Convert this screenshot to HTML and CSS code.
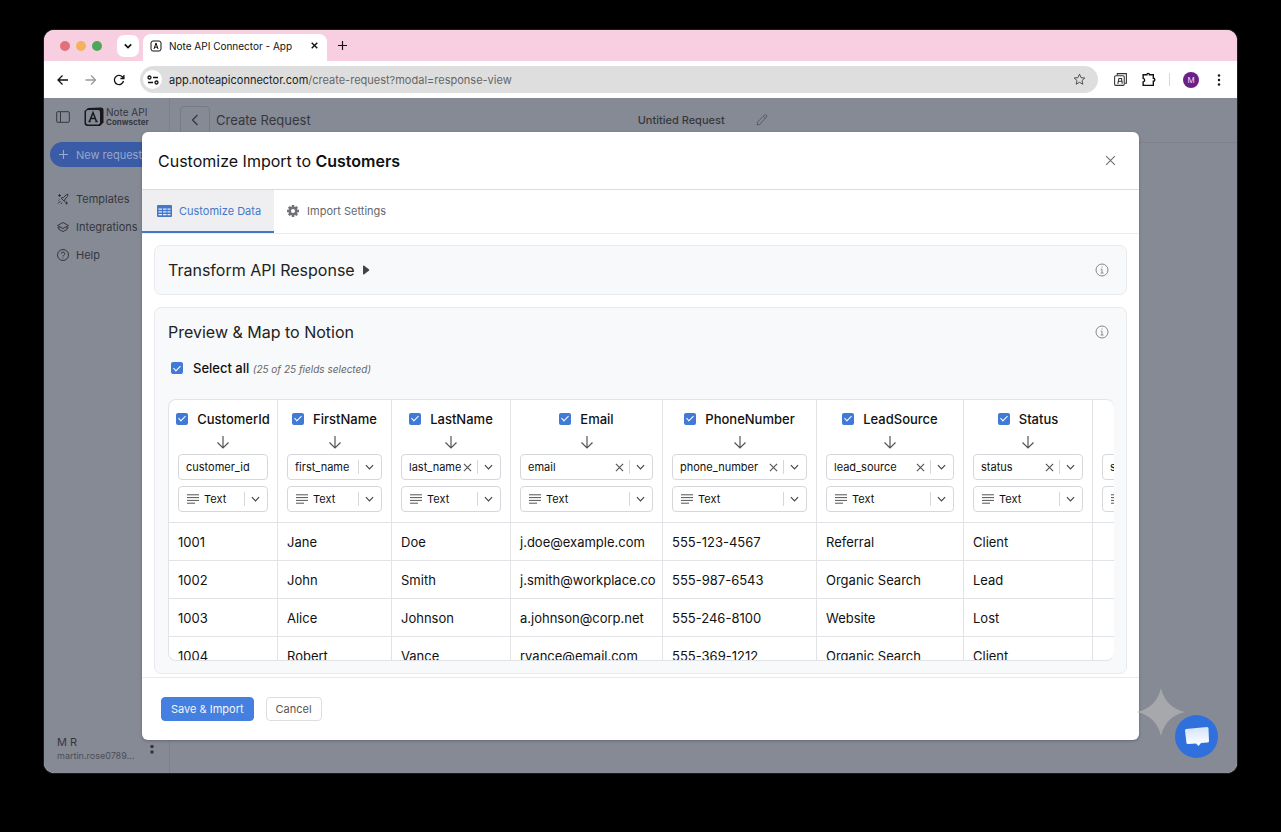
FILE: index.html
```html
<!DOCTYPE html>
<html lang="en">
  <head>
    <meta charset="UTF-8" />
    <meta name="viewport" content="width=device-width, initial-scale=1.0" />
    <title>Note API Connector - App</title>
    <link rel="stylesheet" href="styles.css">
  </head>
  <body>
    <!-- Shared icons -->
    <svg class="sprite" aria-hidden="true">
      <symbol id="chevron" viewBox="0 0 10 10"><path d="M1 3l4 4 4-4" /></symbol>
      <symbol id="cross" viewBox="0 0 10 10"><path d="M1 1l8 8M9 1l-8 8" /></symbol>
      <symbol id="down" viewBox="0 0 14 14"><path d="M7 1v12M1.5 7.5L7 13l5.5-5.5" /></symbol>
      <symbol id="lines" viewBox="0 0 12 10"><path d="M0 .8h12M0 3.6h12M0 6.4h12M0 9.2h8" /></symbol>
      <symbol id="info" viewBox="0 0 14 14"><circle cx="7" cy="7" r="6" /><path d="M5.8 6.2H7v3.6M5.6 10h2.9M7 3.6v1" /></symbol>
    </svg>

    <div class="window">
      <!-- Browser tabs -->
      <div class="tab-strip">
        <div class="lights"><i class="red"></i><i class="amber"></i><i class="green"></i></div>
        <button class="tab-search" aria-label="Search tabs"><svg class="icon s8"><use href="#chevron" /></svg></button>
        <div class="browser-tab">
          <svg class="favicon" viewBox="0 0 12 12"><rect x="1" y="1" width="10" height="10" rx="2" /><path d="M4 9l2-6 2 6M4.6 7.2h2.8" /></svg>
          <span>Note API Connector - App</span>
          <button aria-label="Close tab"><svg class="icon s7"><use href="#cross" /></svg></button>
        </div>
        <button class="new-tab" aria-label="New tab"><svg class="icon s9" viewBox="0 0 10 10"><path d="M5 0v10M0 5h10" /></svg></button>
      </div>

      <!-- Browser toolbar -->
      <div class="toolbar">
        <button aria-label="Back"><svg class="icon s12" viewBox="0 0 12 12"><path d="M11 6H1M5.500 1.500L1 6l4.500 4.500" /></svg></button>
        <button class="faded" aria-label="Forward"><svg class="icon s12" viewBox="0 0 12 12"><path d="M.5 6h10M6 1.5L10.500 6 6 10.500" /></svg></button>
        <button aria-label="Reload"><svg class="icon s12" viewBox="0 0 12 12"><path d="M10.500 7a4.600 4.600 0 1 1-1.200-4.200L10.800 4.300M10.900 1v3.500H7.400" /></svg></button>
        <div class="address">
          <span class="site-info"><svg class="icon s12" viewBox="0 0 12 12"><circle cx="2.500" cy="3.500" r="1.500" /><path d="M6 3.500h5M1 8.500h5" /><circle cx="9.500" cy="8.500" r="1.500" /></svg></span>
          <span class="url"><b>app.noteapiconnector.com</b>/create-request?modal=response-view</span>
          <button aria-label="Bookmark"><svg class="star" viewBox="0 0 14 14"><path d="M7 1.300l1.700 3.700 4 .4-3 2.700.9 4L7 10l-3.600 2.100.9-4-3-2.700 4-.4z" /></svg></button>
        </div>
        <div class="extensions">
          <button aria-label="Note API extension"><svg class="ext" viewBox="0 0 14 14"><path d="M4 3V1.500h8.500v9H11" /><rect x="1.500" y="3.500" width="9" height="9" rx="1" /><path d="M4.500 11l1-5h2.500l.3 2.500-3 .3M8.500 8.500V11" /></svg></button>
          <button aria-label="Extensions"><svg class="puzzle" viewBox="0 0 14 14"><path d="M2 2.500h3.500a1.200 1.200 0 0 1 2.400 0H11.500v3.300a1.200 1.200 0 0 1 0 2.800V12.500H2V9.200q1.400-.3 1.400-1.600T2 6z" /></svg></button>
          <i class="rule"></i>
          <span class="avatar">M</span>
          <button class="menu" aria-label="Menu"><svg class="dots" viewBox="0 0 4 12"><circle cx="2" cy="1.500" r="1.200" /><circle cx="2" cy="6" r="1.200" /><circle cx="2" cy="10.500" r="1.200" /></svg></button>
        </div>
      </div>

      <div class="app">
        <!-- Sidebar -->
        <aside class="sidebar">
          <div class="brand">
            <svg class="panel-icon" viewBox="0 0 14 12"><rect x=".7" y=".7" width="12.600" height="10.600" rx="1" /><path d="M4.500 1v10" /></svg>
            <svg class="logo" viewBox="0 0 20 20"><path class="edge" d="M4 1l13-.5Q19.500.5 19.500 3v12.500L16 19H3.500Q.5 19 .5 16V4z" /><rect class="face" x="2" y="3" width="14" height="14.500" rx="2" /><path class="letter" d="M5.500 14.500L9 5.500l3.500 9M6.800 11.500h4.400M4.500 14.500h2.200M11.300 14.500h2.400" /></svg>
            <div class="brand-name"><span>Note API</span><b>Conwscter</b></div>
          </div>
          <button class="new-request"><svg class="icon s9" viewBox="0 0 10 10"><path d="M5 0v10M0 5h10" /></svg>New request</button>
          <nav>
            <a href="#templates"><svg class="icon s12" viewBox="0 0 12 12"><path d="M4 5l2.500-.5L9 2l2-.8L10.500 3.500 8 6 7.500 8.500M4 5l3.500 3.500M3.500 8L1 10.500M5 9.500l-1 1.500M1.500 7.500l1-1" /><path d="M2.500 1v3M1 2.500h3M9.500 8.500v3M8 10h3" /></svg>Templates</a>
            <a href="#integrations"><svg class="icon s12" viewBox="0 0 12 12"><path d="M6 1.500L.5 4.500 6 7.500l5.500-3zM2 5.500v3l4 2 4-2v-3M.5 6.500L2 7.300M11.500 6.500L10 7.300" /></svg>Integrations</a>
            <a href="#help"><svg class="icon s12" viewBox="0 0 12 12"><circle cx="6" cy="6" r="5.500" /><path d="M4.300 4.700a1.700 1.700 0 1 1 2.400 1.600Q6 6.600 6 7.400M6 8.600v.8" /></svg>Help</a>
          </nav>
          <div class="user">
            <div><span>M R</span><small>martin.rose0789...</small></div>
            <svg class="dots" viewBox="0 0 4 12"><circle cx="2" cy="3.500" r="1.800" /><circle cx="2" cy="9" r="1.800" /></svg>
          </div>
        </aside>

        <!-- Page behind the modal -->
        <main class="page">
          <div class="page-bar">
            <button class="back" aria-label="Go back"><svg class="icon s12" viewBox="0 0 12 12"><path d="M8.500 1L3.500 6l5 5" /></svg></button>
            <h1>Create Request</h1>
            <div class="request-name"><span>Untitied Request</span><svg class="icon s12" viewBox="0 0 12 12"><path d="M1 11l.6-3L8.500 1.100q1-.8 1.900 0t0 1.900L3.900 10.300zM7.400 2.300l2 2" /></svg></div>
          </div>
        </main>

        <!-- Customize import modal -->
        <div class="overlay">
          <section class="modal" role="dialog" aria-labelledby="modal-title">
            <header class="modal-header">
              <h2 id="modal-title">Customize Import to <b>Customers</b></h2>
              <button aria-label="Close"><svg class="icon s11"><use href="#cross" /></svg></button>
            </header>
            <div class="tabs">
              <button class="tab active"><svg class="grid-icon" viewBox="0 0 15 12"><rect class="fill" x="0" y="0" width="15" height="12" rx="1" /><path d="M1.500 4.200h3.500M6 4.200h3.500M10.500 4.200h3M1.500 6.900h3.500M6 6.900h3.500M10.500 6.900h3M1.500 9.600h3.500M6 9.600h3.500M10.500 9.600h3" /></svg>Customize Data</button>
              <button class="tab"><svg class="gear" viewBox="0 0 12 12"><circle cx="6" cy="6" r="3.300" /><path d="M6 0v2.500M6 9.500V12M0 6h2.500M9.500 6H12M1.800 1.800l1.700 1.700M8.500 8.500l1.700 1.700M10.200 1.800L8.500 3.500M3.500 8.500l-1.700 1.700" /></svg>Import Settings</button>
            </div>
            <div class="modal-body">
              <div class="card transform">
                <div class="card-head">
                  <h3>Transform API Response <svg class="play" viewBox="0 0 8 10"><path d="M1 1.500Q1 0 2.300.8l4.500 3.400q1 .8 0 1.600L2.300 9.200Q1 10 1 8.500z" /></svg></h3>
                  <svg class="info"><use href="#info" /></svg>
                </div>
              </div>
              <div class="card preview">
                <div class="card-head">
                  <h3>Preview &amp; Map to Notion</h3>
                  <svg class="info"><use href="#info" /></svg>
                </div>
                <label class="select-all"><input type="checkbox" checked /><span>Select all <em>(25 of 25 fields selected)</em></span></label>
                <div class="table-wrap">
                  <table>
                    <colgroup><col class="w-id" /><col class="w-first" /><col class="w-last" /><col class="w-email" /><col class="w-phone" /><col class="w-lead" /><col class="w-status" /><col class="w-more" /></colgroup>
                    <thead>
                      <tr>
                        <th>
                          <label class="check"><input type="checkbox" checked />CustomerId</label>
                          <svg class="arrow"><use href="#down" /></svg>
                          <div class="field"><input type="text" value="customer_id" aria-label="CustomerId property" /></div>
                          <div class="field"><svg class="lines"><use href="#lines" /></svg><select aria-label="CustomerId type"><option>Text</option></select><svg class="caret"><use href="#chevron" /></svg></div>
                        </th>
                        <th>
                          <label class="check"><input type="checkbox" checked />FirstName</label>
                          <svg class="arrow"><use href="#down" /></svg>
                          <div class="field"><select aria-label="FirstName property"><option>first_name</option></select><svg class="caret"><use href="#chevron" /></svg></div>
                          <div class="field"><svg class="lines"><use href="#lines" /></svg><select aria-label="FirstName type"><option>Text</option></select><svg class="caret"><use href="#chevron" /></svg></div>
                        </th>
                        <th>
                          <label class="check"><input type="checkbox" checked />LastName</label>
                          <svg class="arrow"><use href="#down" /></svg>
                          <div class="field"><select aria-label="LastName property"><option>last_name</option></select><button aria-label="Clear"><svg class="icon s9"><use href="#cross" /></svg></button><svg class="caret"><use href="#chevron" /></svg></div>
                          <div class="field"><svg class="lines"><use href="#lines" /></svg><select aria-label="LastName type"><option>Text</option></select><svg class="caret"><use href="#chevron" /></svg></div>
                        </th>
                        <th>
                          <label class="check"><input type="checkbox" checked />Email</label>
                          <svg class="arrow"><use href="#down" /></svg>
                          <div class="field"><select aria-label="Email property"><option>email</option></select><button aria-label="Clear"><svg class="icon s9"><use href="#cross" /></svg></button><svg class="caret"><use href="#chevron" /></svg></div>
                          <div class="field"><svg class="lines"><use href="#lines" /></svg><select aria-label="Email type"><option>Text</option></select><svg class="caret"><use href="#chevron" /></svg></div>
                        </th>
                        <th>
                          <label class="check"><input type="checkbox" checked />PhoneNumber</label>
                          <svg class="arrow"><use href="#down" /></svg>
                          <div class="field"><select aria-label="PhoneNumber property"><option>phone_number</option></select><button aria-label="Clear"><svg class="icon s9"><use href="#cross" /></svg></button><svg class="caret"><use href="#chevron" /></svg></div>
                          <div class="field"><svg class="lines"><use href="#lines" /></svg><select aria-label="PhoneNumber type"><option>Text</option></select><svg class="caret"><use href="#chevron" /></svg></div>
                        </th>
                        <th>
                          <label class="check"><input type="checkbox" checked />LeadSource</label>
                          <svg class="arrow"><use href="#down" /></svg>
                          <div class="field"><select aria-label="LeadSource property"><option>lead_source</option></select><button aria-label="Clear"><svg class="icon s9"><use href="#cross" /></svg></button><svg class="caret"><use href="#chevron" /></svg></div>
                          <div class="field"><svg class="lines"><use href="#lines" /></svg><select aria-label="LeadSource type"><option>Text</option></select><svg class="caret"><use href="#chevron" /></svg></div>
                        </th>
                        <th>
                          <label class="check"><input type="checkbox" checked />Status</label>
                          <svg class="arrow"><use href="#down" /></svg>
                          <div class="field"><select aria-label="Status property"><option>status</option></select><button aria-label="Clear"><svg class="icon s9"><use href="#cross" /></svg></button><svg class="caret"><use href="#chevron" /></svg></div>
                          <div class="field"><svg class="lines"><use href="#lines" /></svg><select aria-label="Status type"><option>Text</option></select><svg class="caret"><use href="#chevron" /></svg></div>
                        </th>
                        <th>
                          <div class="check"></div>
                          <div class="arrow"></div>
                          <div class="field"><select aria-label="Next property"><option>s</option></select></div>
                          <div class="field"><svg class="lines"><use href="#lines" /></svg></div>
                        </th>
                      </tr>
                    </thead>
                    <tbody>
                      <tr><td>1001</td><td>Jane</td><td>Doe</td><td>j.doe@example.com</td><td>555-123-4567</td><td>Referral</td><td>Client</td><td></td></tr>
                      <tr><td>1002</td><td>John</td><td>Smith</td><td>j.smith@workplace.co</td><td>555-987-6543</td><td>Organic Search</td><td>Lead</td><td></td></tr>
                      <tr><td>1003</td><td>Alice</td><td>Johnson</td><td>a.johnson@corp.net</td><td>555-246-8100</td><td>Website</td><td>Lost</td><td></td></tr>
                      <tr><td>1004</td><td>Robert</td><td>Vance</td><td>rvance@email.com</td><td>555-369-1212</td><td>Organic Search</td><td>Client</td><td></td></tr>
                    </tbody>
                  </table>
                </div>
              </div>
            </div>
            <footer class="modal-footer">
              <button class="btn primary">Save &amp; Import</button>
              <button class="btn">Cancel</button>
            </footer>
          </section>
        </div>

        <svg class="sparkle" viewBox="0 0 48 48"><path d="M24 0C27 13 35 21 48 24 35 27 27 35 24 48 21 35 13 27 0 24 13 21 21 13 24 0z" /></svg>
        <button class="chat" aria-label="Open chat"><svg viewBox="0 0 26 22"><defs><linearGradient id="bubble" x1="0" y1="0" x2="0" y2="1"><stop offset="0" stop-color="#d3e3fc" /><stop offset="1" stop-color="#fff" /></linearGradient></defs><path fill="url(#bubble)" d="M2 3L23 1q1.500 0 1.500 1.500L25 15q0 1.500-1.500 1.600l-6.500.5L14.500 20 12 17.500 4 18q-1.500 0-1.600-1.500L1 4.500Q1 3 2 3z" /></svg></button>
      </div>
    </div>
  </body>
</html>
```

FILE: styles.css
```css
/* Reset */
* {
  margin: 0;
  padding: 0;
  box-sizing: border-box;
}
body {
  font-family: Inter, "Liberation Sans", sans-serif;
  background: #000;
  color: #111;
  height: 100vh;
  padding: 30px 44px 59px;
  display: flex;
  overflow: hidden;
}
button,
input,
select {
  font-family: inherit;
  color: inherit;
  border: none;
  background: none;
}
button {
  display: flex;
  align-items: center;
  justify-content: center;
  cursor: pointer;
}
.sprite {
  display: none;
}
svg {
  display: block;
  flex: none;
  fill: none;
  stroke: currentColor;
}
.icon {
  stroke-width: 1.3;
}
.s7 { width: 7px; height: 7px; stroke-width: 2; }
.s8 { width: 8px; height: 8px; }
.s9 { width: 9px; height: 9px; }
.s11 { width: 11px; height: 11px; stroke-width: 1.1; }
.s12 { width: 12px; height: 12px; }

/* Browser window */
.window {
  flex: 1;
  min-width: 0;
  display: flex;
  flex-direction: column;
  border-radius: 10px;
  overflow: hidden;
  background: #fff;
  box-shadow: 0 0 0 1px #1c1c1c;
}
.tab-strip {
  height: 31px;
  padding: 4px 16px 0;
  display: flex;
  align-items: flex-start;
  background: #f7cfe1;
}
.lights {
  display: flex;
  gap: 6px;
  padding-top: 7px;
}
.lights i {
  width: 10px;
  height: 10px;
  border-radius: 50%;
}
.red { background: #e2717b; }
.amber { background: #f2b35c; }
.green { background: #4ea758; }
.tab-search {
  width: 22px;
  height: 22px;
  margin: 1px 4px 0 15px;
  border-radius: 7px;
  background: #fff;
}
.tab-search .icon {
  stroke-width: 2;
}
.browser-tab {
  width: 184px;
  height: 27px;
  padding: 0 9px 4px 7px;
  display: flex;
  align-items: center;
  gap: 7px;
  border-radius: 8px 8px 0 0;
  background: #fff;
  font-size: 10px;
}
.browser-tab span {
  flex: 1;
  white-space: nowrap;
}
.favicon {
  width: 12px;
  height: 12px;
}
.new-tab {
  width: 22px;
  height: 22px;
  margin-left: 4px;
}
.toolbar {
  height: 37px;
  padding: 0 16px 0 12px;
  display: flex;
  align-items: center;
  gap: 15px;
}
.toolbar > button {
  width: 13px;
}
.faded {
  color: #999;
}
.address {
  flex: 1;
  height: 27px;
  padding: 0 12px 0 3px;
  display: flex;
  align-items: center;
  gap: 7px;
  border-radius: 14px;
  background: #dedede;
  font-size: 11px;
}
.site-info {
  width: 19px;
  height: 19px;
  display: grid;
  place-items: center;
  border-radius: 50%;
  background: #fff;
}
.url {
  flex: 1;
  color: #666;
}
.url b {
  font-weight: 400;
  color: #1b1b1b;
}
.star {
  width: 13px;
  height: 13px;
  color: #444;
}
.extensions {
  display: flex;
  align-items: center;
  gap: 13px;
}
.ext,
.puzzle {
  width: 15px;
  height: 15px;
}
.ext {
  color: #333;
}
.puzzle {
  stroke-width: 1.3;
}
.menu {
  margin-left: 5px;
}
.rule {
  width: 1px;
  height: 13px;
  background: #d8d8d8;
}
.avatar {
  width: 16px;
  height: 16px;
  display: grid;
  place-items: center;
  border-radius: 50%;
  background: #6b1f87;
  color: #f0dcf5;
  font-size: 8px;
}
.dots {
  width: 4px;
  height: 12px;
  fill: currentColor;
  stroke: none;
}

/* App under the modal */
.app {
  flex: 1;
  min-height: 0;
  display: flex;
  position: relative;
  background: #868a95;
  color: #35373d;
}
.sidebar {
  width: 126px;
  padding: 9px 0 11px;
  display: flex;
  flex-direction: column;
  border-right: 1px solid #7d808a;
}
.brand {
  display: flex;
  align-items: center;
  padding-left: 12px;
}
.panel-icon {
  width: 14px;
  height: 12px;
  margin-right: 14px;
}
.logo {
  width: 20px;
  height: 20px;
  margin-right: 2px;
}
.edge {
  fill: #17181b;
  stroke: none;
}
.face {
  fill: #868a95;
  stroke: none;
}
.letter {
  stroke: #17181b;
  stroke-width: 1.5;
}
.brand-name {
  font-size: 10px;
  line-height: 10px;
}
.brand-name span,
.brand-name b {
  display: block;
}
.brand-name b {
  font-size: 8px;
}
.new-request {
  height: 25px;
  margin: 15px 0 0 6px;
  padding-left: 9px;
  justify-content: flex-start;
  gap: 8px;
  border-radius: 13px;
  background: #3a5ba5;
  color: #99a7cb;
  font-size: 11px;
}
nav {
  display: flex;
  flex-direction: column;
  padding: 18px 0 0 13px;
}
nav a {
  height: 28px;
  display: flex;
  align-items: center;
  gap: 7px;
  color: inherit;
  font-size: 11px;
  text-decoration: none;
}
nav .icon {
  stroke-width: 1;
}
.user {
  margin-top: auto;
  padding: 0 15px 0 13px;
  display: flex;
  align-items: center;
  justify-content: space-between;
  font-size: 11px;
  line-height: 13px;
}
.user span,
.user small {
  display: block;
}
.user small {
  font-size: 9px;
  color: #4c4e55;
}
.page {
  flex: 1;
}
.page-bar {
  height: 45px;
  padding-left: 10px;
  display: flex;
  align-items: center;
  border-bottom: 1px solid #7d808a;
}
.back {
  width: 30px;
  height: 28px;
  margin-right: 6px;
  border: 1px solid #777a84;
  border-radius: 4px;
}
.page-bar h1 {
  flex: 1;
  font-size: 13px;
  font-weight: 400;
}
.request-name {
  flex: 2;
  padding-left: 122px;
  display: flex;
  align-items: center;
  gap: 31px;
  font-size: 11px;
  font-weight: 500;
}
.request-name .icon {
  color: #5a5c64;
  stroke-width: 1;
}

/* Modal */
.overlay {
  position: absolute;
  inset: 0;
  padding: 34px 98px 33px;
  display: flex;
}
.modal {
  flex: 1;
  min-width: 0;
  display: flex;
  flex-direction: column;
  border-radius: 6px;
  overflow: hidden;
  background: #fff;
  color: #111;
  box-shadow: 0 1px 3px rgba(0, 0, 0, 0.25);
}
.modal-header {
  height: 58px;
  padding: 0 23px 0 16px;
  display: flex;
  align-items: center;
  justify-content: space-between;
  border-bottom: 1px solid #dcdcde;
}
.modal-header h2 {
  font-size: 16px;
  font-weight: 400;
}
.modal-header b {
  font-weight: 600;
}
.modal-header button {
  color: #777;
}
.tabs {
  height: 44px;
  display: flex;
  border-bottom: 1px solid #ececee;
}
.tab {
  padding: 0 13px 2px;
  gap: 8px;
  font-size: 11px;
  color: #66686c;
}
.tab.active {
  padding: 0 13px 0 15px;
  gap: 7px;
  background: #efeff1;
  color: #4477c8;
  border-bottom: 2px solid #4477c8;
}
.grid-icon {
  width: 15px;
  height: 12px;
}
.grid-icon .fill {
  fill: #4477c8;
  stroke: none;
}
.grid-icon path {
  stroke: #e6edf8;
  stroke-width: 1.3;
}
.gear {
  width: 12px;
  height: 12px;
  color: #707276;
  stroke-width: 2.5;
}
.modal-body {
  flex: 1;
  min-height: 0;
  padding: 11px 12px 3px;
  display: flex;
  flex-direction: column;
  gap: 12px;
}
.card {
  padding: 0 12px 0 13px;
  border: 1px solid #e9eaed;
  border-radius: 7px;
  background: #f8f9fb;
}
.card-head {
  height: 48px;
  display: flex;
  align-items: center;
  justify-content: space-between;
}
.card-head h3 {
  display: flex;
  align-items: center;
  gap: 7px;
  font-size: 16px;
  font-weight: 400;
  color: #222;
}
.play {
  width: 8px;
  height: 10px;
  fill: #444;
  stroke: none;
}
.info {
  width: 14px;
  height: 14px;
  margin-right: 5px;
  color: #888;
}
.preview {
  flex: 1;
  min-height: 0;
  padding-bottom: 12px;
  display: flex;
  flex-direction: column;
}
input[type="checkbox"] {
  appearance: none;
  width: 12px;
  height: 12px;
  flex: none;
  display: grid;
  place-items: center;
  border-radius: 2px;
  background: #4079d6;
}
input[type="checkbox"]:checked::after {
  content: "";
  width: 3px;
  height: 6px;
  margin-bottom: 2px;
  border: solid #fff;
  border-width: 0 1px 1px 0;
  transform: rotate(45deg);
}
.select-all {
  height: 24px;
  margin-bottom: 19px;
  padding-left: 3px;
  display: flex;
  align-items: center;
  gap: 10px;
  font-size: 13px;
  font-weight: 500;
}
.select-all em {
  font-size: 10px;
  font-weight: 400;
  color: #666;
}

/* Mapping table */
.table-wrap {
  flex: 1;
  min-height: 0;
  overflow: hidden;
  border: 1px solid #e2e3e6;
  border-right: none;
  border-radius: 8px;
  background: #fff;
}
table {
  width: 1040px;
  table-layout: fixed;
  border-collapse: separate;
  border-spacing: 0;
}
.w-id { width: 109px; }
.w-first { width: 114px; }
.w-last { width: 119px; }
.w-email { width: 152px; }
.w-phone { width: 154px; }
.w-lead { width: 147px; }
.w-status { width: 129px; }
th,
td {
  padding: 0 9px;
  border-right: 1px solid #e2e3e6;
  border-bottom: 1px solid #e2e3e6;
  white-space: nowrap;
}
th {
  padding-bottom: 10px;
}
td {
  height: 38px;
  font-size: 13px;
}
.check {
  height: 35px;
  padding-top: 2px;
  display: flex;
  align-items: center;
  justify-content: center;
  gap: 9px;
  font-size: 13px;
  font-weight: 500;
}
.arrow {
  width: 14px;
  height: 14px;
  margin: 0 auto 5px;
  color: #555;
  stroke-width: 1.2;
}
.field {
  height: 26px;
  display: flex;
  align-items: center;
  border: 1px solid #d6d7da;
  border-radius: 4px;
}
.field + .field {
  margin-top: 6px;
}
.field input,
.field select {
  appearance: none;
  flex: 1;
  min-width: 0;
  width: 100%;
  height: 100%;
  padding-left: 7px;
  font-size: 11px;
}
.field .lines + select {
  padding-left: 5px;
}
.lines {
  width: 12px;
  height: 10px;
  margin-left: 8px;
  color: #555;
}
.field button {
  width: 12px;
  height: 12px;
  margin-right: 4px;
  color: #555;
}
.caret {
  width: 23px;
  height: 14px;
  padding: 2px 7px 2px 6px;
  border-left: 1px solid #d6d7da;
  color: #444;
  stroke-width: 1.3;
}

/* Footer */
.modal-footer {
  height: 63px;
  padding: 0 19px;
  display: flex;
  align-items: center;
  gap: 12px;
  border-top: 1px solid #e9eaed;
}
.btn {
  height: 24px;
  padding: 0 9px;
  border: 1px solid #dddee0;
  border-radius: 4px;
  color: #555;
  font-size: 11px;
}
.btn.primary {
  border-color: #457fe0;
  background: #457fe0;
  color: #f2f6fd;
}

/* Floating items */
.sparkle {
  position: absolute;
  right: 52px;
  bottom: 37px;
  width: 48px;
  height: 48px;
  fill: #a7a8ac;
  stroke: none;
}
.chat {
  position: absolute;
  right: 19px;
  bottom: 15px;
  width: 43px;
  height: 43px;
  border-radius: 50%;
  background: #2f70dc;
}
.chat svg {
  width: 26px;
  height: 22px;
  stroke: none;
}
```
